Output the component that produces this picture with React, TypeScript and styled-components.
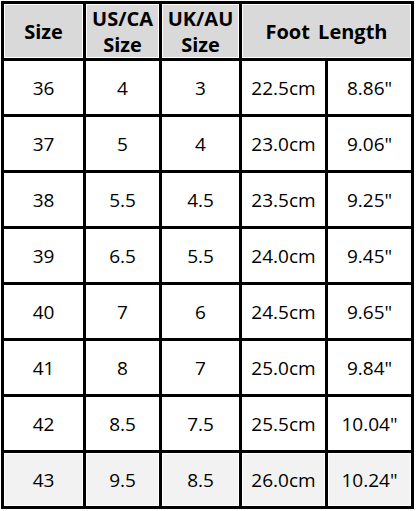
import {FC} from "react";
import styled, {createGlobalStyle} from "styled-components";

const GlobalStyle = createGlobalStyle`
    html, body {
        margin: 0;
        padding: 0;
        background: #ffffff;
    }

    body {
        font-family: "Open Sans", "Noto Sans", "Liberation Sans", sans-serif;
        color: #000;
    }
`;

interface SizeRow {
    eu: string
    us: string
    uk: string
    cm: string
    inch: string
}

const rows: SizeRow[] = [
    {eu: "36", us: "4", uk: "3", cm: "22.5cm", inch: "8.86\""},
    {eu: "37", us: "5", uk: "4", cm: "23.0cm", inch: "9.06\""},
    {eu: "38", us: "5.5", uk: "4.5", cm: "23.5cm", inch: "9.25\""},
    {eu: "39", us: "6.5", uk: "5.5", cm: "24.0cm", inch: "9.45\""},
    {eu: "40", us: "7", uk: "6", cm: "24.5cm", inch: "9.65\""},
    {eu: "41", us: "8", uk: "7", cm: "25.0cm", inch: "9.84\""},
    {eu: "42", us: "8.5", uk: "7.5", cm: "25.5cm", inch: "10.04\""},
    {eu: "43", us: "9.5", uk: "8.5", cm: "26.0cm", inch: "10.24\""},
];

const Chart = styled.div`
    display: grid;
    grid-template-columns: 79px 73px 77px 83px 83px;
    grid-template-rows: 54px repeat(8, 53px);
    gap: 3px;
    padding: 3px;
    margin: 1px 0 0 1px;
    width: max-content;
    background: #000;
`;

const HeadCell = styled.div<{ $span?: number }>`
    grid-column: span ${p => p.$span ?? 1};
    display: flex;
    align-items: center;
    justify-content: center;
    text-align: center;
    background: #d9d9d9;
    box-shadow: inset 0 0 0 1px #fff;
    font-weight: 700;
    font-size: 20px;
    line-height: 26px;
    word-spacing: 3px;
    padding-top: 2px;
`;

const Cell = styled.div<{ $shade?: boolean }>`
    display: flex;
    align-items: center;
    justify-content: center;
    background: ${p => (p.$shade ? "#f2f2f2" : "#fff")};
    box-shadow: inset 0 0 0 1px #fff;
    font-size: 19px;
    line-height: 24px;
`;

const SizeChart: FC = () => (
    <Chart>
        <HeadCell>Size</HeadCell>
        <HeadCell>US/CA<br/>Size</HeadCell>
        <HeadCell>UK/AU<br/>Size</HeadCell>
        <HeadCell $span={2}>Foot Length</HeadCell>
        {rows.map((row, index) => {
            const shade = index === rows.length - 1;
            return [
                <Cell key={`${row.eu}-eu`} $shade={shade}>{row.eu}</Cell>,
                <Cell key={`${row.eu}-us`} $shade={shade}>{row.us}</Cell>,
                <Cell key={`${row.eu}-uk`} $shade={shade}>{row.uk}</Cell>,
                <Cell key={`${row.eu}-cm`} $shade={shade}>{row.cm}</Cell>,
                <Cell key={`${row.eu}-in`} $shade={shade}>{row.inch}</Cell>,
            ];
        })}
    </Chart>
);

export default function App() {
    return (
        <>
            <GlobalStyle/>
            <SizeChart/>
        </>
    );
}
